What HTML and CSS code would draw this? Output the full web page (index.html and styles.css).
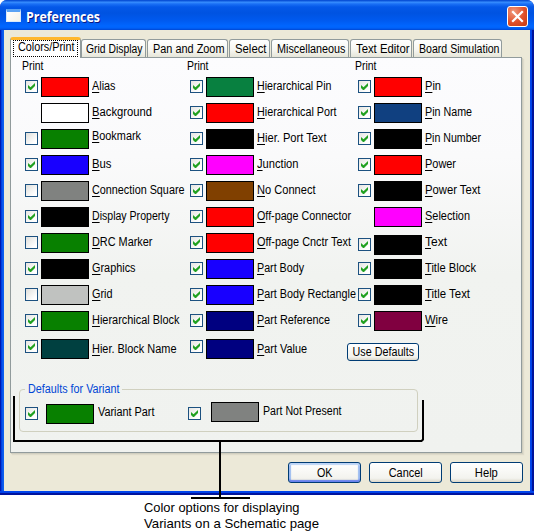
FILE: index.html
```html
<!DOCTYPE html>
<html lang="en">
<head>
<meta charset="utf-8">
<title>Preferences</title>
<link rel="stylesheet" href="styles.css">
</head>
<body>
<main class="window">
  <header class="titlebar">
    <span class="app-icon"></span>
    <h1 data-w="73.5">Preferences</h1>
    <button class="close" aria-label="Close"><svg width="21" height="21" viewBox="0 0 21 21"><path d="M6 6l9 9M15 6l-9 9" stroke="#fff" stroke-width="2.2" stroke-linecap="square"/></svg></button>
  </header>
  <div class="body">
    <nav class="tabs">
      <div class="tab active"><span data-w="56">Colors/Print</span></div>
      <div class="tab t-grid"><span data-w="56">Grid Display</span></div>
      <div class="tab t-pan"><span data-w="71">Pan and Zoom</span></div>
      <div class="tab t-select"><span data-w="31">Select</span></div>
      <div class="tab t-misc"><span data-w="68">Miscellaneous</span></div>
      <div class="tab t-text"><span data-w="53">Text Editor</span></div>
      <div class="tab t-board"><span data-w="80">Board Simulation</span></div>
    </nav>
    <section class="panel">
      <div class="columns">
        <div class="column" id="col1"><div class="head"><span data-w="21">Print</span></div></div>
        <div class="column" id="col2"><div class="head"><span data-w="21">Print</span></div></div>
        <div class="column" id="col3"><div class="head"><span data-w="21">Print</span></div></div>
      </div>
      <fieldset class="variants">
        <legend><span data-w="91">Defaults for Variant</span></legend>
        <div class="variant-row">
          <i class="check on"></i><i class="swatch first"></i><div class="label first"><span data-w="56">Variant Part</span></div>
          <i class="check on second"></i><i class="swatch second"></i><div class="label second"><span data-w="78">Part Not Present</span></div>
        </div>
      </fieldset>
    </section>
    <footer class="actions">
      <button class="btn default"><span data-w="15">OK</span></button>
      <button class="btn"><span data-w="33.5">Cancel</span></button>
      <button class="btn"><span data-w="22.5">Help</span></button>
    </footer>
  </div>
</main>
<svg class="callout" width="534" height="532" viewBox="0 0 534 532"><path d="M14 396V441H421.500L423 439.500V400M220 441V498M191 498H250" fill="none" stroke="#000" stroke-width="2"/></svg>
<p class="caption"><span data-w="155">Color options for displaying</span><br><span data-w="174.5">Variants on a Schematic page</span></p>
<script src="preferences.js"></script>
</body>
</html>
```
FILE: styles.css
```css
* { box-sizing: border-box; }
body { margin: 0; background: #fff; color: #000; font: 12px/14px "Liberation Sans", Arial, sans-serif; overflow: hidden; }
button { font: inherit; padding: 0; color: #000; }
[data-w] { white-space: nowrap; display: inline-block; transform-origin: 0 50%; }
.window { width: 534px; height: 495px; border-radius: 7px 7px 0 0; overflow: hidden;
  background: linear-gradient(transparent 491px, #0047f0 491px, #0040e4 493px, #00139c 493px), linear-gradient(90deg, #0018b0 0, #0018b0 1px, #0040e0 1px, #0040e0 2px, #1a6af5 3px, #0054e8 4px, #0047f0 530px, #0040e4 532px, #00139c 532px); }
.titlebar { height: 30px; display: flex; align-items: flex-start; padding: 6px 6px 0;
  background: linear-gradient(#0a52d8 0, #0a52d8 1px, #3b91ff 2px, #1a6ff5 4px, #0458e8 7px, #0053e1 13px, #0059ee 20px, #0066ff 26px, #0062fa 28px, #0046d2 30px); }
.app-icon { width: 15px; height: 13px; margin-top: 3px; background: linear-gradient(135deg, #fff, #f4f3e8); border: 1px solid #d9e8fa; border-top: 3px solid #5aa2f4; }
h1 { margin: 1px 0 0 5px; font: bold 14px/20px "Open Sans", sans-serif; color: #fff; text-shadow: 1px 1px 0 #0a1883; }
.close { width: 21px; height: 21px; margin-left: auto; border: 1px solid #fff; border-radius: 3px; background: radial-gradient(circle at 30% 25%, #f0987c, #e0502a 55%, #c33b12); }
.close svg { display: block; margin: -1px; }
.body { height: 465px; background: #ece9d8; background-clip: padding-box; border: solid transparent; border-width: 0 4px 4px; padding: 7px 7px 0 6px; }
.tabs { display: flex; align-items: flex-end; height: 20px; }
.tab { height: 18px; margin-right: 1px; padding: 2px 0 0 4px; border: 1px solid #919b9c; border-bottom: 0; border-radius: 3px 3px 0 0; background: linear-gradient(#fff, #f6f6f1 60%, #e6e5d9); }
.tab.active { width: 71px; height: 21px; margin: 0 0 -1px; padding: 0 0 0 7px; border-top: 3px solid #ffb72c; background: #fff; z-index: 1; position: relative; }
.tab.active::after { content: ""; position: absolute; left: 2px; right: 2px; top: 0; bottom: 1px; border: 1px dotted #000; }
.t-grid { width: 65px; }
.t-pan { width: 81px; padding-left: 5px; }
.t-select { width: 41px; padding-left: 5px; }
.t-misc { width: 78px; padding-left: 5px; }
.t-text { width: 62px; padding-left: 5px; }
.t-board { width: 89px; padding-left: 5px; }
.panel { height: 396px; width: 512px; border: 1px solid #919b9c; background: linear-gradient(#fcfcfe, #fafafb 25%, #f1f3f0 55%, #f0f2ef); box-shadow: 1px 1px 0 #d0cebf, 2px 2px 1px #dedbcb; padding-top: 1px; }
.columns { display: flex; height: 321px; padding-left: 11px; }
.column { width: 165px; padding-left: 3px; }
#col2 { width: 168px; }
#col3 { width: 160px; }
.head { height: 18px; margin-left: -3px; }
.row { height: 26px; display: flex; align-items: flex-start; }
.row.drop { margin-top: 2px; }
.row.drop + .row { margin-top: -2px; }
.row.drop .label, .row.raised .label { margin-top: 0; }
.check { flex: none; width: 13px; height: 13px; margin-top: 3px; border: 1px solid #1c5180; background: linear-gradient(135deg, #dfdfdb, #fff 80%); }
.check.on { background-image: url("data:image/svg+xml,%3Csvg xmlns='http://www.w3.org/2000/svg' width='11' height='11'%3E%3Cpath d='M2 4v3l2 2h1l4-4V2L4.500 6.300Z' fill='%2321a121'/%3E%3C/svg%3E"), linear-gradient(135deg, #e6e6e2, #fff 80%); }
.check.none { visibility: hidden; }
.swatch { flex: none; width: 48px; height: 20px; margin-left: 3px; border: 1px solid #000; }
.label { margin: 2px 0 0 2.5px; }
#col2 .label, #col3 .label { margin-left: 3px; }
.label u { text-underline-offset: 2px; text-decoration-thickness: 1px; text-decoration-skip-ink: none; }
.row.last { margin-top: 2px; }
.row.last .check { margin-top: 1px; }
.row.last .label { margin-top: 3px; }
.row.use { height: 19px; margin: 6px 0 0 -11px; }
.btn { width: 73px; height: 21px; border: 1px solid #003c74; border-radius: 3px; background: linear-gradient(#fff, #f3f3ee 80%, #dcd8cb); display: flex; align-items: center; justify-content: center; }
.btn [data-w] { transform-origin: 50% 50%; }
.btn.small { width: 72px; height: 18px; }
.btn.default { box-shadow: inset 0 2px 1px #bcd4f6, inset 0 -2px 1px #6982ee, inset 2px 0 1px #9cbcf0, inset -2px 0 1px #9cbcf0; }
.variants { width: 399px; height: 50px; margin: 2px 0 0 8px; padding: 0; border: 1px solid #d0d0bf; border-radius: 4px; }
.variants legend { width: 97px; margin-left: 5px; padding: 0 3px; color: #0046d5; height: 14px; }
.variant-row { display: flex; align-items: flex-start; padding: 6px 0 0 5px; }
.variant-row .check { margin-top: 5px; }
.swatch.first { margin: 2px 0 0 8px; background: #088000; }
.swatch.second { margin: 0 0 0 10px; background: #808280; }
.label.first { width: 56px; margin-top: 3px; margin-left: 4px; }
.label.second { margin-top: 2px; margin-left: 4px; }
.check.second { margin-left: 34px; }
.actions { display: flex; justify-content: flex-end; gap: 8px; padding-top: 9px; }
.callout { position: absolute; left: 0; top: 0; pointer-events: none; }
.caption { margin: 5px 0 0 144px; font-size: 13px; line-height: 16px; }
```
FILE: preferences.js
```js
// [print state (1 on, 0 off, -1 none), color, label, label width, row modifier]
const columns = {
  col1: [
    [1, "#ff0000", "Alias", 23], [-1, "#ffffff", "Background", 59.5], [0, "#088000", "Bookmark", 48.5, "raised"],
    [1, "#1800ff", "Bus", 19], [0, "#808280", "Connection Square", 92], [1, "#000000", "Display Property", 77],
    [0, "#088000", "DRC Marker", 60], [1, "#000000", "Graphics", 43], [0, "#c0c2c0", "Grid", 20],
    [1, "#088000", "Hierarchical Block", 87], [1, "#004040", "Hier. Block Name", 84, "last"]
  ],
  col2: [
    [1, "#088040", "Hierarchical Pin", 74], [1, "#ff0000", "Hierarchical Port", 79], [1, "#000000", "Hier. Port Text", 69],
    [1, "#ff00ff", "Junction", 41], [1, "#804000", "No Connect", 58], [1, "#ff0000", "Off-page Connector", 93.5],
    [1, "#ff0000", "Off-page Cnctr Text", 93.5], [1, "#1800ff", "Part Body", 46.5], [1, "#1800ff", "Part Body Rectangle", 98.5],
    [1, "#000080", "Part Reference", 72.5], [1, "#000080", "Part Value", 49.5, "last"]
  ],
  col3: [
    [1, "#ff0000", "Pin", 15.5], [1, "#104080", "Pin Name", 46.5], [1, "#000000", "Pin Number", 55.5],
    [1, "#ff0000", "Power", 30.5], [1, "#000000", "Power Text", 55], [-1, "#ff00ff", "Selection", 44.5],
    [1, "#000000", "Text", 21.5, "drop"], [1, "#000000", "Title Block", 50.5], [1, "#000000", "Title Text", 44.5],
    [1, "#800040", "Wire", 22.5]
  ]
};

for (const [id, rows] of Object.entries(columns)) {
  document.getElementById(id).insertAdjacentHTML("beforeend", rows.map(([state, color, text, width, modifier = ""]) =>
    `<div class="row ${modifier}"><i class="check ${state === 1 ? "on" : state < 0 ? "none" : ""}"></i>` +
    `<i class="swatch" style="background:${color}"></i>` +
    `<div class="label"><span data-w="${width}"><u>${text[0]}</u>${text.slice(1)}</span></div></div>`).join(""));
}
document.getElementById("col3").insertAdjacentHTML("beforeend",
  '<div class="row use"><button class="btn small"><span data-w="61">Use Defaults</span></button></div>');

// Condense each text so that it fills its width.
document.querySelectorAll("[data-w]").forEach(el => {
  const natural = el.getBoundingClientRect().width;
  el.style.transform = `scaleX(${(Number(el.dataset.w) + 0.5) / natural})`;
});
```
